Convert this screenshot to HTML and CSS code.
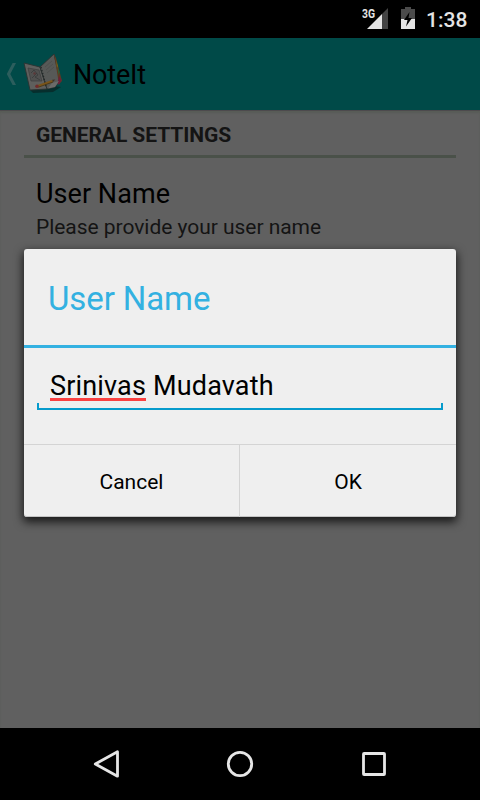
FILE: index.html
```html
<!DOCTYPE html>
<html lang="en">
<head>
<meta charset="utf-8">
<title>NoteIt</title>
<link rel="stylesheet" href="styles.css">
</head>
<body>
<div class="screen">
  <div class="status">
    <svg class="signal" width="28" height="24" viewBox="0 0 28 24">
      <path d="M26 1V22H20V7Z" fill="#434343"/>
      <path d="M20 7V22H5Z" fill="#e4e4e4"/>
      <text x="0" y="10.5" class="net" textLength="13" lengthAdjust="spacingAndGlyphs">3G</text>
    </svg>
    <svg class="battery" width="14" height="22" viewBox="0 0 14 22">
      <path d="M4 0H10V2H14V12H0V2H4Z" fill="#4b4b4b"/>
      <path d="M0 12H14V22H0Z" fill="#e4e4e4"/>
      <path d="M8.5 5L3 13H6.5L5 19.5L11 11H7.5Z" fill="#000"/>
    </svg>
    <span class="clock">1:38</span>
  </div>
  <header class="bar">
    <svg class="up" width="11" height="22" viewBox="0 0 11 22">
      <path d="M6.6 0H10L4.3 11L10 22H6.6L.8 11Z" fill="#2c5e5d"/>
    </svg>
    <svg class="logo" width="40" height="42" viewBox="0 0 40 42">
      <path d="M7 37L31 33L38 34L30 39L10 40Z" fill="#062e2d"/>
      <path d="M1 10L17 14L24 36L7 37Z" fill="#5f5f5d" stroke="#2b3231" stroke-width=".9"/>
      <path d="M17 14L31 1L37 28L32 34L24 36Z" fill="#575957" stroke="#2b3231" stroke-width=".9"/>
      <path d="M31 1L33 5L39 28L36 31Z" fill="#5f3a22"/>
      <path d="M33 7L35 13L34 15Z" fill="#6f6a1c"/>
      <path d="M34.3 14L36.6 19L35.6 22Z" fill="#2d6135"/>
      <path d="M36 23L38.5 27L36 32L34.5 30Z" fill="#6b2039"/>
      <path d="M25 35.5L29 30L36 28L32 34Z" fill="#6b6b69"/>
      <path d="M5 15L16 17L19 28L8 28Z" fill="#515150" stroke="#3c3e3e" stroke-width=".7"/>
      <path d="M8 20L11 17L15 22L12 24L17 27M9 25L14 20" fill="none" stroke="#393b3b" stroke-width=".8"/>
      <circle cx="11.5" cy="20.5" r="1.2" fill="#5a3838"/>
      <path d="M18 14L23 33" stroke="#242929" stroke-width="1.3" stroke-dasharray="1.5 1.5"/>
      <path d="M22 14L29 8M23 17L30 11M24 20L31 14" stroke="#4a4c4b" stroke-width=".7"/>
      <path d="M15 33L29.5 28" stroke="#7a551a" stroke-width="2.3"/>
      <path d="M15.4 34.2L30 29" stroke="#45320f" stroke-width=".8"/>
      <path d="M29.2 26.8L32.3 26.6L30 29Z" fill="#403222"/>
      <circle cx="14" cy="33.3" r="1.8" fill="#702b2b"/>
    </svg>
    <h1 class="app">NoteIt</h1>
  </header>
  <main class="settings">
    <h2 class="category">GENERAL SETTINGS</h2>
    <div class="pref">
      <div class="pref-title">User Name</div>
      <div class="pref-summary">Please provide your user name</div>
    </div>
  </main>
  <section class="dialog">
    <h3 class="dialog-title">User Name</h3>
    <div class="dialog-body">
      <div class="field"><span class="misspelt">Srinivas</span> Mudavath</div>
    </div>
    <div class="actions">
      <div class="action">Cancel</div>
      <div class="action">OK</div>
    </div>
  </section>
  <nav class="nav">
    <svg width="28" height="30" viewBox="0 0 28 30"><path d="M25.5 2.8V27.2L3.3 15Z"/></svg>
    <svg width="28" height="30" viewBox="0 0 28 30"><circle cx="14" cy="15" r="11.7"/></svg>
    <svg width="28" height="30" viewBox="0 0 28 30"><rect x="3.5" y="4.5" width="21" height="21" rx=".6"/></svg>
  </nav>
</div>
</body>
</html>
```
FILE: styles.css
```css
* { box-sizing: border-box; margin: 0; }

body {
  font-family: Roboto, sans-serif;
  font-weight: 400;
  background: #000;
}

.screen {
  position: relative;
  display: flex;
  flex-direction: column;
  width: 480px;
  height: 800px;
  overflow: hidden;
}

.status {
  display: flex;
  align-items: flex-start;
  justify-content: flex-end;
  height: 38px;
  padding: 7px 12px 0 0;
  background: #000;
}
.signal { margin-right: 11px; }
.net { font: 700 12px Roboto, sans-serif; fill: #e4e4e4; }
.battery { margin-right: 11px; }
.clock {
  width: 42px;
  font-size: 21px;
  font-weight: 500;
  line-height: 26px;
  color: #e4e4e4;
  white-space: nowrap;
}

.bar {
  display: flex;
  align-items: center;
  height: 72px;
  padding-left: 6px;
  background: #004a48;
}
.up { margin-right: 6px; }
.logo { margin-right: 10px; }
.app {
  padding-top: 2px;
  font-size: 27px;
  font-weight: 400;
  line-height: 32px;
  letter-spacing: -.2px;
  color: #000;
}

.settings {
  flex: 1;
  padding: 0 24px;
  background: #606060;
  box-shadow: inset 0 1px #4d4a4d, inset 0 3px 2px #585c57;
}
.category {
  height: 48px;
  padding: 13px 12px 0;
  border-bottom: 3px solid #4a5149;
  font-size: 21px;
  font-weight: 700;
  line-height: 25px;
  letter-spacing: -.07px;
  color: #141414;
}
.pref { padding: 20px 12px 0; }
.pref-title { font-size: 27px; line-height: 32px; letter-spacing: .05px; color: #000; }
.pref-summary {
  margin-top: 5px;
  font-size: 21px;
  line-height: 25px;
  letter-spacing: -.04px;
  color: #141414;
}

.dialog {
  position: absolute;
  top: 249px;
  left: 24px;
  width: 432px;
  height: 268px;
  border-radius: 3px;
  background: #efefef;
  box-shadow: inset 0 -1px #c4c4c4, 0 4px 10px 1px rgba(0, 0, 0, .75);
}
.dialog-title {
  height: 99px;
  padding: 30px 24px 0;
  border-bottom: 3px solid #33b1e1;
  font-size: 33px;
  font-weight: 400;
  line-height: 39px;
  letter-spacing: -.1px;
  color: #33b1e1;
}
.dialog-body { height: 96px; padding: 21px 13px 0; }
.field {
  height: 41px;
  padding: 1px 0 0 13px;
  font-size: 27px;
  line-height: 32px;
  letter-spacing: .17px;
  color: #000;
  background:
    linear-gradient(#069bcc, #069bcc) left bottom / 100% 2px no-repeat,
    linear-gradient(#069bcc, #069bcc) left bottom / 2px 7px no-repeat,
    linear-gradient(#069bcc, #069bcc) right bottom / 2px 7px no-repeat;
}
.misspelt {
  background: linear-gradient(#fb4141, #fb4141) left bottom 1px / 100% 3px no-repeat;
}
.actions { display: flex; height: 73px; border-top: 1px solid #d4d4d4; }
.action {
  width: 215px;
  font-size: 21px;
  line-height: 75px;
  text-align: center;
  color: #000;
}
.action + .action { width: 217px; border-left: 1px solid #d4d4d4; }

.nav {
  display: flex;
  align-items: center;
  justify-content: space-between;
  height: 72px;
  padding: 0 92px;
  background: #000;
}
.nav path, .nav circle, .nav rect {
  fill: none;
  stroke: #e6e6e6;
  stroke-width: 2.8;
  stroke-linejoin: round;
}
```
